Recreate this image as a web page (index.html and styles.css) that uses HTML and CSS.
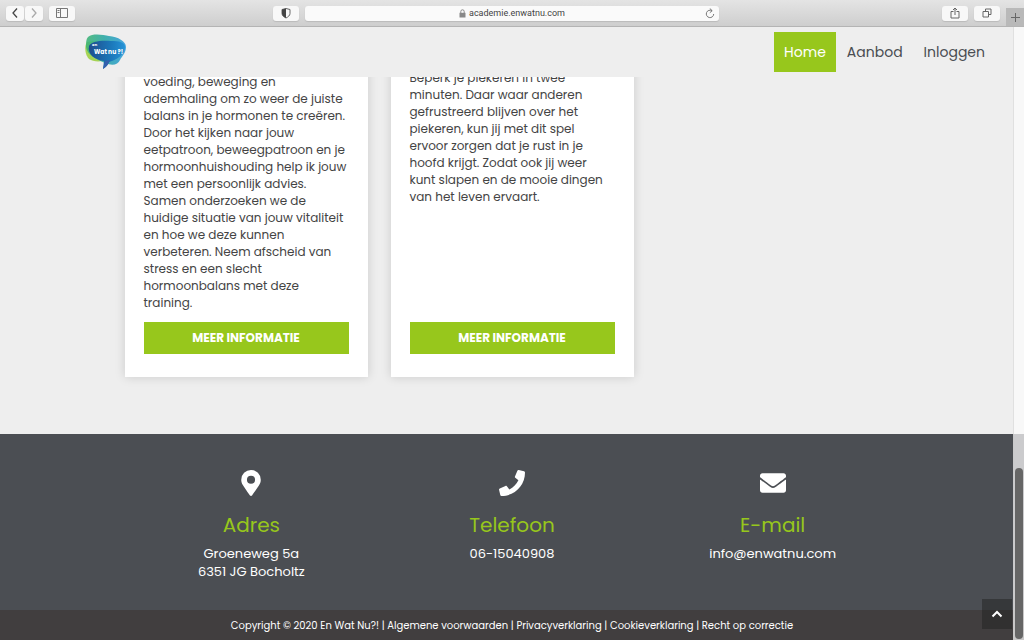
FILE: index.html
```html
<!DOCTYPE html>
<html lang="nl">
<head>
<meta charset="utf-8">
<meta name="viewport" content="width=device-width, initial-scale=1">
<title>En Wat Nu?!</title>
<link rel="stylesheet" href="styles.css">
</head>
<body>
<div class="toolbar">
  <div class="tools tools-left">
    <div class="history">
      <button class="tool" aria-label="Vorige"><svg width="8" height="12" viewBox="0 0 8 12"><path d="M6 1.500 2 6l4 4.500" stroke="#444" stroke-width="1.300"/></svg></button>
      <button class="tool" aria-label="Volgende"><svg width="8" height="12" viewBox="0 0 8 12"><path d="M2 1.500 6 6l-4 4.500" stroke="#aaa" stroke-width="1.300"/></svg></button>
    </div>
    <button class="tool tool-wide" aria-label="Zijbalk"><svg width="12" height="10" viewBox="0 0 12 10"><path d="M.5.500h11v9H.5zM4.500.500v9M1.500 2.500h2M1.500 4.500h2" stroke="#777"/></svg></button>
  </div>
  <button class="tool tool-wide" aria-label="Privacy"><svg width="10" height="12" viewBox="0 0 10 12"><path d="M5 1.500 9 2.500v4c0 2-2 3.500-4 4.500-2-1-4-2.500-4-4.500v-4z" stroke="#666"/><path d="M5 1.500v9.500c-2-1-4-2.500-4-4.500v-4z" fill="#444"/></svg></button>
  <div class="address">
    <span class="address-text"><svg width="7" height="9" viewBox="0 0 7 9"><path d="M1.800 4V2.500a1.700 1.700 0 0 1 3.400 0V4" stroke="#888"/><path d="M.5 3.800h6V8.500h-6z" fill="#888"/></svg>academie.enwatnu.com</span>
    <button class="reload" aria-label="Vernieuwen"><svg width="10" height="11" viewBox="0 0 10 11"><path d="M7 2.800A3.700 3.700 0 1 0 8.700 6M4.800.5 7.200 2.700 4.800 4.700" stroke="#777"/></svg></button>
  </div>
  <div class="tools tools-right">
    <button class="tool tool-wide" aria-label="Delen"><svg width="10" height="12" viewBox="0 0 10 12"><path d="M3.500 4.500H1v6.500h8V4.500H6.500M5 8V1M3 3l2-2 2 2" stroke="#666"/></svg></button>
    <button class="tool tool-wide" aria-label="Tabbladen"><svg width="10" height="10" viewBox="0 0 10 10"><path d="M1 3.500h5.500V9H1zM3.500 3.500V1H9v5.500H6.500" stroke="#666"/></svg></button>
  </div>
  <button class="new-tab" aria-label="Nieuw tabblad"><svg width="9" height="9" viewBox="0 0 9 9"><path d="M4.500 0v9M0 4.500h9" stroke="#666"/></svg></button>
</div>
<div class="page">
  <header class="site-header">
    <a class="logo" href="#" aria-label="En Wat Nu?!">
      <svg width="44" height="38" viewBox="0 0 44 38">
        <defs>
          <linearGradient id="back" x1="0" y1="0" x2="1" y2="0"><stop offset="0" stop-color="#3fb573"/><stop offset=".45" stop-color="#28a7a2"/><stop offset="1" stop-color="#309ade"/></linearGradient>
          <linearGradient id="front" x1="0" y1="0" x2="1" y2="0"><stop offset="0" stop-color="#204d8d"/><stop offset=".6" stop-color="#1b77b9"/><stop offset="1" stop-color="#2593d7"/></linearGradient>
        </defs>
        <path d="M3 9C0 13 1 22 5 26c4 3 12 3 17 1L12 8z" fill="#a6d354"/>
        <path d="M4 4c5-4 15-2 21-1 9 1 17 5 17 11 0 6-4 9-6 13-2 5-8 6-15 3C12 26 3 22 2 14 2 10 2 6 4 4z" fill="url(#back)" opacity=".88"/>
        <path d="M5 13c2-5 13-6 22-5 8 0 14 1 14 6 0 7-8 13-16 15-1 3-3 5-6 7l1-8C11 27 3 21 5 13z" fill="url(#front)"/>
        <path d="M21 28l5-1c-1 4-4 7-7 9z" fill="#3560ae"/>
        <text class="logo-small" x="8" y="13">en</text>
        <text class="logo-text" x="10" y="21">Wat nu ?!</text>
      </svg>
    </a>
    <nav class="nav">
      <a class="nav-link active" href="#">Home</a>
      <a class="nav-link" href="#">Aanbod</a>
      <a class="nav-link" href="#">Inloggen</a>
    </nav>
  </header>
  <main class="main">
    <div class="cards">
      <article class="card">
        <p class="card-text card-text-long">voeding, beweging en<br>ademhaling om zo weer de juiste<br>balans in je hormonen te creëren.<br>Door het kijken naar jouw<br>eetpatroon, beweegpatroon en je<br>hormoonhuishouding help ik jouw<br>met een persoonlijk advies.<br>Samen onderzoeken we de<br>huidige situatie van jouw vitaliteit<br>en hoe we deze kunnen<br>verbeteren. Neem afscheid van<br>stress en een slecht<br>hormoonbalans met deze<br>training.</p>
        <a class="more" href="#">MEER INFORMATIE</a>
      </article>
      <article class="card">
        <p class="card-text">Beperk je piekeren in twee<br>minuten. Daar waar anderen<br>gefrustreerd blijven over het<br>piekeren, kun jij met dit spel<br>ervoor zorgen dat je rust in je<br>hoofd krijgt. Zodat ook jij weer<br>kunt slapen en de mooie dingen<br>van het leven ervaart.</p>
        <a class="more" href="#">MEER INFORMATIE</a>
      </article>
    </div>
  </main>
  <footer class="footer">
    <div class="contact">
      <section class="contact-item">
        <svg width="20" height="26" viewBox="0 0 384 512"><path fill="#fff" d="M172 502C27 291 0 270 0 192a192 192 0 0 1 384 0c0 78-27 99-172 310-10 13-30 13-40 0zm20-230a80 80 0 1 0 0-160 80 80 0 0 0 0 160z"/></svg>
        <h2 class="contact-title">Adres</h2>
        <p class="contact-text">Groeneweg 5a<br>6351 JG Bocholtz</p>
      </section>
      <section class="contact-item">
        <svg width="26" height="26" viewBox="0 0 512 512"><path fill="#fff" d="M493 25 389 1c-11-3-23 3-27 14l-48 112c-4 10-1 21 7 28l61 49c-36 77-99 141-178 178l-49-61c-7-8-18-11-28-7L15 362c-11 4-17 16-14 27l24 104c3 11 12 19 24 19 256 0 463-207 463-463 0-12-8-21-19-24z"/></svg>
        <h2 class="contact-title">Telefoon</h2>
        <p class="contact-text">06-15040908</p>
      </section>
      <section class="contact-item">
        <svg width="26" height="26" viewBox="0 0 512 512"><path fill="#fff" d="M502 191c4-3 10 0 10 5v204c0 26-22 48-48 48H48c-26 0-48-22-48-48V196c0-5 6-8 10-5 22 18 52 40 155 114 21 16 57 48 91 48s71-33 91-48c103-74 133-96 155-114zM256 320c23 0 57-29 74-41 133-97 143-105 173-129 6-4 9-11 9-19v-19c0-26-22-48-48-48H48c-26 0-48 22-48 48v19c0 8 3 15 9 19 30 24 40 32 173 129 17 12 51 41 74 41z"/></svg>
        <h2 class="contact-title">E-mail</h2>
        <p class="contact-text">info@enwatnu.com</p>
      </section>
    </div>
    <div class="legal">Copyright © 2020 En Wat Nu?! | <a href="#">Algemene voorwaarden</a> | <a href="#">Privacyverklaring</a> | <a href="#">Cookieverklaring</a> | <a href="#">Recht op correctie</a></div>
  </footer>
  <button class="to-top" aria-label="Naar boven"><svg width="12" height="8" viewBox="0 0 12 8"><path d="M1.500 6.500 6 2l4.500 4.500" stroke="#fff" stroke-width="2"/></svg></button>
  <div class="scroll-track"><div class="scroll-thumb"></div></div>
</div>
</body>
</html>
```
FILE: styles.css
```css
* { box-sizing: border-box; }
body {
  margin: 0;
  height: 100vh;
  display: flex;
  flex-direction: column;
  overflow: hidden;
  background: #eee;
  color: #444;
  font-family: Poppins, Inter, sans-serif;
}
svg { fill: none; display: block; }
a { color: inherit; text-decoration: none; }
button { border: 0; padding: 0; display: flex; align-items: center; justify-content: center; }

.toolbar {
  flex: none;
  height: 27px;
  display: flex;
  align-items: center;
  background: linear-gradient(#e4e4e4, #cecece);
  border-bottom: 1px solid #b4b4b4;
  padding-left: 6px;
}
.tools { display: flex; }
.tools-left { flex: 1; gap: 6px; }
.tools-right { flex: 1; justify-content: flex-end; gap: 6px; padding-right: 6px; }
.history { display: flex; gap: 1px; }
.tool { width: 18px; height: 15px; background: #f8f8f8; border-radius: 3px; box-shadow: 0 1px 1px #bbb; }
.tool-wide { width: 26px; }
.address {
  width: 41%;
  max-width: 414px;
  height: 15px;
  margin: 0 14px 0 6px;
  display: flex;
  align-items: center;
  background: #fafafa;
  border-radius: 3px;
  box-shadow: 0 1px 1px #bbb;
  padding: 0 4px 0 14px;
}
.address-text { flex: 1; display: flex; align-items: center; justify-content: center; gap: 3px; font: 9px/15px Roboto, sans-serif; color: #444; }
.reload { background: none; }
.new-tab { align-self: flex-end; width: 18px; height: 18px; background: #b9b9b9; }

.page { flex: 1; min-height: 0; position: relative; display: flex; flex-direction: column; }
.site-header { flex: none; height: 50px; display: flex; align-items: center; justify-content: space-between; padding: 0 29px 0 84px; }
.logo-small { font: bold 4px Poppins, Lato, sans-serif; fill: #fff; }
.logo-text { font: bold 6px Poppins, Lato, sans-serif; fill: #fff; }
.nav { display: flex; gap: 1px; }
.nav-link { padding: 0 10px; font-size: 14px; line-height: 40px; color: #4a4d52; }
.nav-link.active { background: #97c71c; color: #fff; }

.main { flex: 1; min-height: 0; overflow: hidden; display: flex; align-items: flex-end; justify-content: center; padding-bottom: 57px; }
.cards { width: 100%; max-width: 775px; display: grid; grid-template-columns: repeat(3, minmax(0, 1fr)); gap: 23px; }
.card { display: flex; flex-direction: column; justify-content: space-between; padding: 9px 19px 23px; background: #fff; box-shadow: 0 0 10px rgba(0, 0, 0, .15); }
.card-text { margin: 0 0 11px; font-size: 12px; line-height: 17px; white-space: nowrap; }
.card-text-long { padding-top: 4px; }
.more { background: #97c71c; color: #fff; font-size: 12px; font-weight: 700; line-height: 32px; text-align: center; }

.footer { flex: none; background: #4b4e53; color: #fff; }
.contact { max-width: 782px; min-height: 176px; margin: 0 auto; padding: 36px 0 29px; display: grid; grid-template-columns: repeat(3, 1fr); }
.contact-item { display: flex; flex-direction: column; align-items: center; text-align: center; }
.contact-title { margin: 16px 0 7px; font-size: 20px; font-weight: 400; line-height: 26px; color: #97c71c; }
.contact-text { margin: 0; font-size: 13px; line-height: 18px; }
.legal { padding-top: 2px; background: #413e3f; font-size: 10px; line-height: 28px; text-align: center; }

.to-top { position: absolute; right: 12px; bottom: 11px; width: 30px; height: 30px; background: rgba(34, 34, 34, .5); }
.scroll-track { position: absolute; top: 0; right: 0; bottom: 0; width: 11px; background: rgba(252, 252, 252, .72); border-left: 1px solid rgba(200, 200, 200, .5); }
.scroll-thumb { position: absolute; top: 72%; right: 1px; bottom: 1px; width: 8px; border-radius: 4px; background: #666; }
```
